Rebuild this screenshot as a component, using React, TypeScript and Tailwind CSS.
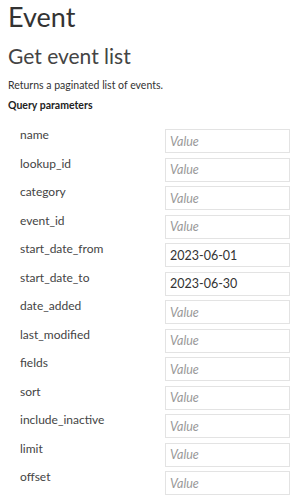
import React from 'react';

const params = [
  { name: 'name', value: '' },
  { name: 'lookup_id', value: '' },
  { name: 'category', value: '' },
  { name: 'event_id', value: '' },
  { name: 'start_date_from', value: '2023-06-01' },
  { name: 'start_date_to', value: '2023-06-30' },
  { name: 'date_added', value: '' },
  { name: 'last_modified', value: '' },
  { name: 'fields', value: '' },
  { name: 'sort', value: '' },
  { name: 'include_inactive', value: '' },
  { name: 'limit', value: '' },
  { name: 'offset', value: '' },
];

const App = () => {
  return (
    <div className="w-[296px] h-[500px] overflow-hidden bg-white px-2 text-[#333]" style={{ fontFamily: 'Lato, "Noto Sans", sans-serif' }}>
      <h1 className="text-[27px] leading-[32px] pt-[1px] font-normal text-[#333]">Event</h1>
      <h2 className="text-[21px] leading-[26px] mt-[10px] font-normal text-[#444]">Get event list</h2>
      <p className="text-[10.5px] leading-[14px] mt-[9px] text-[#333]">Returns a paginated list of events.</p>
      <h3 className="text-[10.5px] leading-[14px] font-bold mt-[6px] text-[#222]">Query parameters</h3>

      <div className="flex flex-col gap-y-[4.5px] mt-[17px]">
        {params.map((p) => (
          <div key={p.name} className="flex items-start">
            <div className="w-[157px] shrink-0 pl-[12px] -mt-[2px] text-[12px] leading-[16px] text-[#444]">{p.name}</div>
            <input
              readOnly
              value={p.value}
              placeholder="Value"
              className="w-[125px] h-[24px] border border-[#e3e3e3] px-[4px] text-[12.5px] text-[#333] placeholder:italic placeholder:text-[#999] outline-none"
            />
          </div>
        ))}
      </div>
    </div>
  );
};

export default App;
